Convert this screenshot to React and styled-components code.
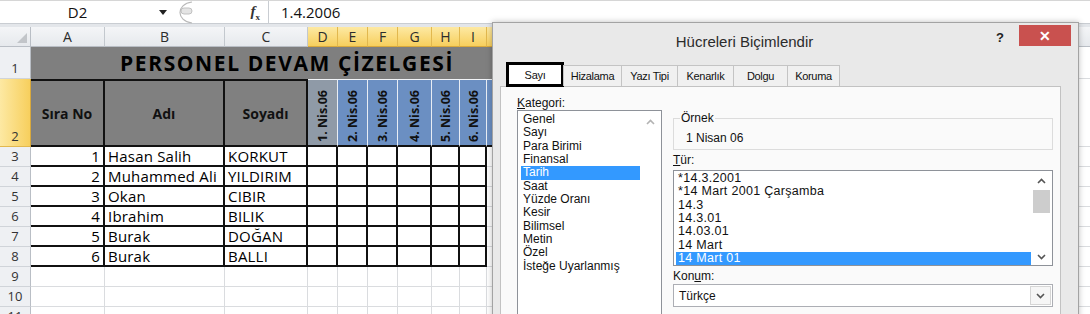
import React from "react";
import styled, { createGlobalStyle } from "styled-components";

const GlobalStyle = createGlobalStyle`
  html, body {
    margin: 0;
    padding: 0;
    background: #ffffff;
    overflow: hidden;
  }
  body {
    font-family: "Open Sans", "Noto Sans", sans-serif;
  }
`;

const letters = ["A", "B", "C", "D", "E", "F", "G", "H", "I", "J", "K", "L", "M", "N", "O", "P", "Q", "R", "S", "T"];
const widths = [74, 120, 83, 30, 30, 30, 34, 28, 27, 64, 64, 64, 64, 64, 64, 64, 64, 64, 64, 64];

const people = [
  [1, "Hasan Salih", "KORKUT"],
  [2, "Muhammed Ali", "YILDIRIM"],
  [3, "Okan", "CIBIR"],
  [4, "Ibrahim", "BILIK"],
  [5, "Burak", "DOĞAN"],
  [6, "Burak", "BALLI"],
];

const dates = ["1. Nis.06", "2. Nis.06", "3. Nis.06", "4. Nis.06", "5. Nis.06", "6. Nis.06", ""];

const categories = [
  "Genel", "Sayı", "Para Birimi", "Finansal", "Tarih", "Saat", "Yüzde Oranı",
  "Kesir", "Bilimsel", "Metin", "Özel", "İsteğe Uyarlanmış",
];

const types = [
  "*14.3.2001", "*14 Mart 2001 Çarşamba", "14.3", "14.3.01", "14.03.01", "14 Mart", "14 Mart 01",
];

const tabs = [
  { label: "Sayı", w: 58 },
  { label: "Hizalama", w: 59 },
  { label: "Yazı Tipi", w: 57 },
  { label: "Kenarlık", w: 57 },
  { label: "Dolgu", w: 55 },
  { label: "Koruma", w: 53 },
];

/* ---------- formula bar ---------- */

const Page = styled.div`
  position: relative;
  width: 1090px;
  height: 314px;
  overflow: hidden;
`;

const FormulaBar = styled.div`
  display: flex;
  height: 24px;
  box-sizing: border-box;
  background: #fff;
  border-top: 1px solid #d6d6d6;
  border-bottom: 1px solid #c9cdd2;
`;

const NameBox = styled.div`
  width: 155px;
  display: flex;
  align-items: center;
  justify-content: center;
  font-size: 15px;
  color: #111;
`;

const NameCaret = styled.div`
  width: 15px;
  display: flex;
  align-items: center;
  justify-content: center;
`;

const FxArea = styled.div`
  width: 98px;
  display: flex;
  align-items: center;
  justify-content: space-between;
  padding-right: 8px;
  box-sizing: border-box;
`;

const FxLabel = styled.div`
  font-family: "Liberation Serif", serif;
  font-style: italic;
  font-weight: bold;
  font-size: 15px;
  color: #333;
  sub {
    font-size: 9px;
    font-style: normal;
  }
`;

const FormulaInput = styled.div`
  flex: 1;
  display: flex;
  align-items: center;
  padding-left: 12px;
  border-left: 1px solid #c9cdd2;
  font-size: 15px;
  color: #111;
`;

const Strip = styled.div`
  height: 3px;
  background: #e3e6ea;
`;

/* ---------- sheet ---------- */

const Grid = styled.div`
  display: grid;
  grid-template-columns: 31px ${widths.map((w) => w + "px").join(" ")};
  grid-template-rows: 20px 32px 68px repeat(9, 20px);
`;

const Corner = styled.div`
  position: relative;
  box-sizing: border-box;
  background: linear-gradient(#f4f5f7, #e6e9ed);
  border-right: 1px solid #b9bec5;
  border-bottom: 1px solid #b9bec5;
  &::after {
    content: "";
    position: absolute;
    right: 3px;
    bottom: 3px;
    border-left: 10px solid transparent;
    border-bottom: 10px solid #c2c5c9;
  }
`;

const ColHead = styled.div`
  box-sizing: border-box;
  display: flex;
  align-items: center;
  justify-content: center;
  font-size: 14px;
  color: #2c2c2c;
  background: ${(p) =>
    p.$selected ? "linear-gradient(#fde9a3, #f7cf5d)" : "linear-gradient(#f4f5f7, #e6e9ed)"};
  border-right: 1px solid ${(p) => (p.$selected ? "#e2b84e" : "#c3c8ce")};
  border-bottom: 1px solid ${(p) => (p.$selected ? "#d9a93c" : "#b9bec5")};
`;

const RowHead = styled.div`
  box-sizing: border-box;
  display: flex;
  align-items: flex-end;
  justify-content: center;
  padding-bottom: 1px;
  font-size: 13px;
  color: #333;
  background: ${(p) => (p.$selected ? "linear-gradient(90deg, #fde9a3, #f7cf5d)" : "#eef0f3")};
  border-right: 1px solid ${(p) => (p.$selected ? "#d9a93c" : "#b9bec5")};
  border-bottom: 1px solid ${(p) => (p.$selected ? "#e2b84e" : "#d0d4d9")};
`;

const TitleCell = styled.div`
  grid-column: span 10;
  box-sizing: border-box;
  display: flex;
  align-items: center;
  justify-content: center;
  padding-right: 8px;
  background: #7f7f7f;
  font-size: 21px;
  font-weight: 700;
  letter-spacing: 1.6px;
  color: #000;
`;

const HeadCell = styled.div`
  box-sizing: border-box;
  display: flex;
  align-items: center;
  justify-content: center;
  background: #808080;
  border-top: 2px solid #111;
  border-right: 2px solid #111;
  border-bottom: 2px solid #111;
  font-size: 14px;
  font-weight: 700;
  color: #111;
`;

const DateCell = styled.div`
  box-sizing: border-box;
  display: flex;
  align-items: flex-end;
  justify-content: center;
  padding-bottom: 3px;
  background: ${(p) => (p.$active ? "#8f9aa7" : "#6b8fc2")};
  border-top: 1px solid #f2f4f7;
  border-right: 1px solid #e8edf4;
  border-bottom: 2px solid #111;
  span {
    writing-mode: vertical-rl;
    transform: rotate(180deg);
    font-size: 12.5px;
    font-weight: 700;
    color: #111;
    white-space: nowrap;
  }
`;

const DataCell = styled.div`
  box-sizing: border-box;
  display: flex;
  align-items: center;
  justify-content: ${(p) => (p.$right ? "flex-end" : "flex-start")};
  padding: 0 3px;
  background: #fff;
  border-right: 2px solid #111;
  border-bottom: 2px solid #111;
  font-size: 15px;
  letter-spacing: 0.2px;
  color: #000;
  white-space: nowrap;
  overflow: hidden;
`;

const EmptyCell = styled.div`
  box-sizing: border-box;
  background: #fff;
  border-right: 1px solid #dadcdf;
  border-bottom: 1px solid #dadcdf;
`;

/* ---------- dialog ---------- */

const Dialog = styled.div`
  position: absolute;
  left: 492px;
  top: 22px;
  width: 587px;
  height: 300px;
  box-sizing: border-box;
  display: flex;
  flex-direction: column;
  background: #e9e9e9;
  border: 1px solid #a3a3a3;
  box-shadow: 0 0 6px rgba(0, 0, 0, 0.25);
  font-family: "Liberation Sans", Arial, sans-serif;
  color: #000;
`;

const TitleBar = styled.div`
  height: 36px;
  flex-shrink: 0;
  display: flex;
  align-items: flex-start;
`;

const Title = styled.div`
  flex: 1;
  align-self: center;
  padding-left: 6px;
  text-align: center;
  font-size: 15px;
  color: #2b2b2b;
`;

const HelpButton = styled.div`
  margin-top: 7px;
  width: 23px;
  padding-left: 6px;
  font-size: 13px;
  font-weight: 700;
  color: #222;
`;

const CloseButton = styled.div`
  margin: 2px 7px 0 0;
  width: 52px;
  height: 21px;
  display: flex;
  align-items: center;
  justify-content: center;
  background: #c9514f;
  color: #fff;
  font-size: 14px;
  font-weight: 700;
`;

const Body = styled.div`
  flex: 1;
  display: flex;
  flex-direction: column;
  padding: 3px 17px 0 7px;
`;

const TabRow = styled.div`
  display: flex;
  align-items: flex-end;
  height: 25px;
  flex-shrink: 0;
  padding-left: 6px;
  position: relative;
  z-index: 1;
`;

const Tab = styled.div`
  box-sizing: border-box;
  width: ${(p) => p.$w}px;
  height: ${(p) => (p.$selected ? 25 : 21)}px;
  margin-bottom: ${(p) => (p.$selected ? 0 : 1)}px;
  margin-right: -1px;
  display: flex;
  align-items: center;
  justify-content: center;
  font-size: 11px;
  letter-spacing: -0.3px;
  color: #111;
  background: ${(p) => (p.$selected ? "#fff" : "#f0f0f0")};
  border: ${(p) => (p.$selected ? "3px solid #000" : "1px solid #c4c4c4")};
  border-bottom: ${(p) => (p.$selected ? "3px solid #000" : "none")};
`;

const Panel = styled.div`
  flex: 1;
  margin-top: -1px;
  display: flex;
  gap: 11px;
  padding: 9px 7px 0 16px;
  background: #fafafa;
  border: 1px solid #c2c2c2;
  border-bottom: none;
`;

const LeftColumn = styled.div`
  width: 145px;
  flex-shrink: 0;
  display: flex;
  flex-direction: column;
`;

const RightColumn = styled.div`
  width: 380px;
  flex-shrink: 0;
  display: flex;
  flex-direction: column;
  padding-top: 22px;
`;

const Label = styled.div`
  font-size: 12px;
  line-height: 14px;
  height: 14px;
  color: #111;
  u {
    text-decoration: underline;
  }
`;

const ListBox = styled.div`
  box-sizing: border-box;
  height: ${(p) => p.$h}px;
  flex-shrink: 0;
  display: flex;
  background: #fff;
  border: 1px solid #8e9299;
`;

const ListItems = styled.div`
  flex: 1;
  padding: ${(p) => p.$pad};
`;

const ListItem = styled.div`
  height: 13.33px;
  line-height: 13.33px;
  padding-left: 2px;
  font-size: ${(p) => p.$size}px;
  letter-spacing: ${(p) => p.$spacing || 0}px;
  white-space: nowrap;
  background: ${(p) => (p.$selected ? "#3399ff" : "transparent")};
  color: ${(p) => (p.$selected ? "#fff" : "#111")};
`;

const ScrollBar = styled.div`
  width: 21px;
  display: flex;
  flex-direction: column;
  align-items: center;
`;

const ArrowBox = styled.div`
  height: ${(p) => p.$h}px;
  display: flex;
  align-items: center;
  justify-content: center;
`;

const Thumb = styled.div`
  width: 17px;
  height: 23px;
  background: #cdcdcd;
`;

const Filler = styled.div`
  flex: 1;
`;

const GroupBox = styled.div`
  position: relative;
  box-sizing: border-box;
  height: 32px;
  padding: 12px 0 0 12px;
  border: 1px solid #dcdcdc;
`;

const Legend = styled.span`
  position: absolute;
  top: -8px;
  left: 6px;
  padding: 0 1px;
  background: #fafafa;
  font-size: 12px;
  line-height: 14px;
  color: #111;
`;

const Sample = styled.div`
  font-size: 12px;
  line-height: 14px;
  color: #111;
`;

const Spaced = styled.div`
  margin-top: ${(p) => p.$m}px;
  margin-bottom: ${(p) => p.$b || 0}px;
`;

const Combo = styled.div`
  box-sizing: border-box;
  height: 23px;
  display: flex;
  align-items: center;
  background: #fff;
  border: 1px solid #acaeb4;
  font-size: 12px;
  color: #111;
`;

const ComboText = styled.div`
  flex: 1;
  padding-left: 5px;
`;

const ComboButton = styled.div`
  box-sizing: border-box;
  width: 21px;
  height: 19px;
  margin-right: 1px;
  display: flex;
  align-items: center;
  justify-content: center;
  border: 1px solid #d5d5d5;
  background: #f6f6f6;
`;

const Chevron = ({ dir = "up", color = "#555" }) => (
  <svg width="9" height="6" viewBox="0 0 9 6">
    <path
      d={dir === "up" ? "M1 5 L4.5 1.5 L8 5" : "M1 1 L4.5 4.5 L8 1"}
      fill="none"
      stroke={color}
      strokeWidth="1.6"
    />
  </svg>
);

const Caret = () => (
  <svg width="8" height="5" viewBox="0 0 8 5">
    <path d="M0 0 H8 L4 5 Z" fill="#222" />
  </svg>
);

const Splitter = () => (
  <svg width="30" height="23" viewBox="0 0 30 23">
    <path d="M22 1 C 6 3, 6 20, 22 22" stroke="#b9b9b9" fill="none" strokeWidth="1.2" />
    <rect x="11" y="7" width="11" height="6" rx="3" fill="#e4e4e4" stroke="#c1c1c1" />
  </svg>
);

const Sheet = () => {
  const extra = letters.slice(10);
  return (
    <Grid>
      <Corner />
      {letters.map((l, i) => (
        <ColHead key={l} $selected={i >= 3 && i <= 9}>
          {l}
        </ColHead>
      ))}

      <RowHead>1</RowHead>
      <TitleCell>PERSONEL DEVAM ÇİZELGESİ</TitleCell>
      {extra.map((l) => (
        <EmptyCell key={"r1" + l} />
      ))}

      <RowHead $selected>2</RowHead>
      <HeadCell>Sıra No</HeadCell>
      <HeadCell>Adı</HeadCell>
      <HeadCell>Soyadı</HeadCell>
      {dates.map((d, i) => (
        <DateCell key={"d" + i} $active={i === 0}>
          <span>{d}</span>
        </DateCell>
      ))}
      {extra.map((l) => (
        <EmptyCell key={"r2" + l} />
      ))}

      {people.map(([no, name, surname], r) => (
        <React.Fragment key={"p" + r}>
          <RowHead>{r + 3}</RowHead>
          <DataCell $right>{no}</DataCell>
          <DataCell>{name}</DataCell>
          <DataCell>{surname}</DataCell>
          {dates.slice(0, 6).map((_, i) => (
            <DataCell key={"c" + i} />
          ))}
          {letters.slice(9).map((l) => (
            <EmptyCell key={l} />
          ))}
        </React.Fragment>
      ))}

      {[9, 10, 11].map((n) => (
        <React.Fragment key={"e" + n}>
          <RowHead>{n}</RowHead>
          {letters.map((l) => (
            <EmptyCell key={l} />
          ))}
        </React.Fragment>
      ))}
    </Grid>
  );
};

const FormatDialog = () => (
  <Dialog>
    <TitleBar>
      <Title>Hücreleri Biçimlendir</Title>
      <HelpButton>?</HelpButton>
      <CloseButton>✕</CloseButton>
    </TitleBar>
    <Body>
      <TabRow>
        {tabs.map((t, i) => (
          <Tab key={t.label} $w={t.w} $selected={i === 0}>
            {t.label}
          </Tab>
        ))}
      </TabRow>
      <Panel>
        <LeftColumn>
          <Label>
            <u>K</u>ategori:
          </Label>
          <ListBox $h={215}>
            <ListItems $pad="2px 0 0 3px">
              {categories.map((c) => (
                <ListItem key={c} $size={12} $selected={c === "Tarih"}>
                  {c}
                </ListItem>
              ))}
            </ListItems>
            <ScrollBar>
              <ArrowBox $h={22}>
                <Chevron dir="up" color="#b3b3b3" />
              </ArrowBox>
            </ScrollBar>
          </ListBox>
        </LeftColumn>

        <RightColumn>
          <GroupBox>
            <Legend>Örnek</Legend>
            <Sample>1 Nisan 06</Sample>
          </GroupBox>
          <Spaced $m={3} $b={3}>
            <Label>
              <u>T</u>ür:
            </Label>
          </Spaced>
          <ListBox $h={96}>
            <ListItems $pad="1px 0 0 2px">
              {types.map((t) => (
                <ListItem key={t} $size={12.5} $spacing={0.3} $selected={t === "14 Mart 01"}>
                  {t}
                </ListItem>
              ))}
            </ListItems>
            <ScrollBar>
              <ArrowBox $h={19}>
                <Chevron dir="up" />
              </ArrowBox>
              <Thumb />
              <Filler />
              <ArrowBox $h={17}>
                <Chevron dir="down" />
              </ArrowBox>
            </ScrollBar>
          </ListBox>
          <Spaced $m={3} $b={1}>
            <Label>
              Kon<u>u</u>m:
            </Label>
          </Spaced>
          <Combo>
            <ComboText>Türkçe</ComboText>
            <ComboButton>
              <Chevron dir="down" />
            </ComboButton>
          </Combo>
        </RightColumn>
      </Panel>
    </Body>
  </Dialog>
);

const App = () => (
  <Page>
    <GlobalStyle />
    <FormulaBar>
      <NameBox>D2</NameBox>
      <NameCaret>
        <Caret />
      </NameCaret>
      <FxArea>
        <Splitter />
        <FxLabel>
          f<sub>x</sub>
        </FxLabel>
      </FxArea>
      <FormulaInput>1.4.2006</FormulaInput>
    </FormulaBar>
    <Strip />
    <Sheet />
    <FormatDialog />
  </Page>
);

export default App;
